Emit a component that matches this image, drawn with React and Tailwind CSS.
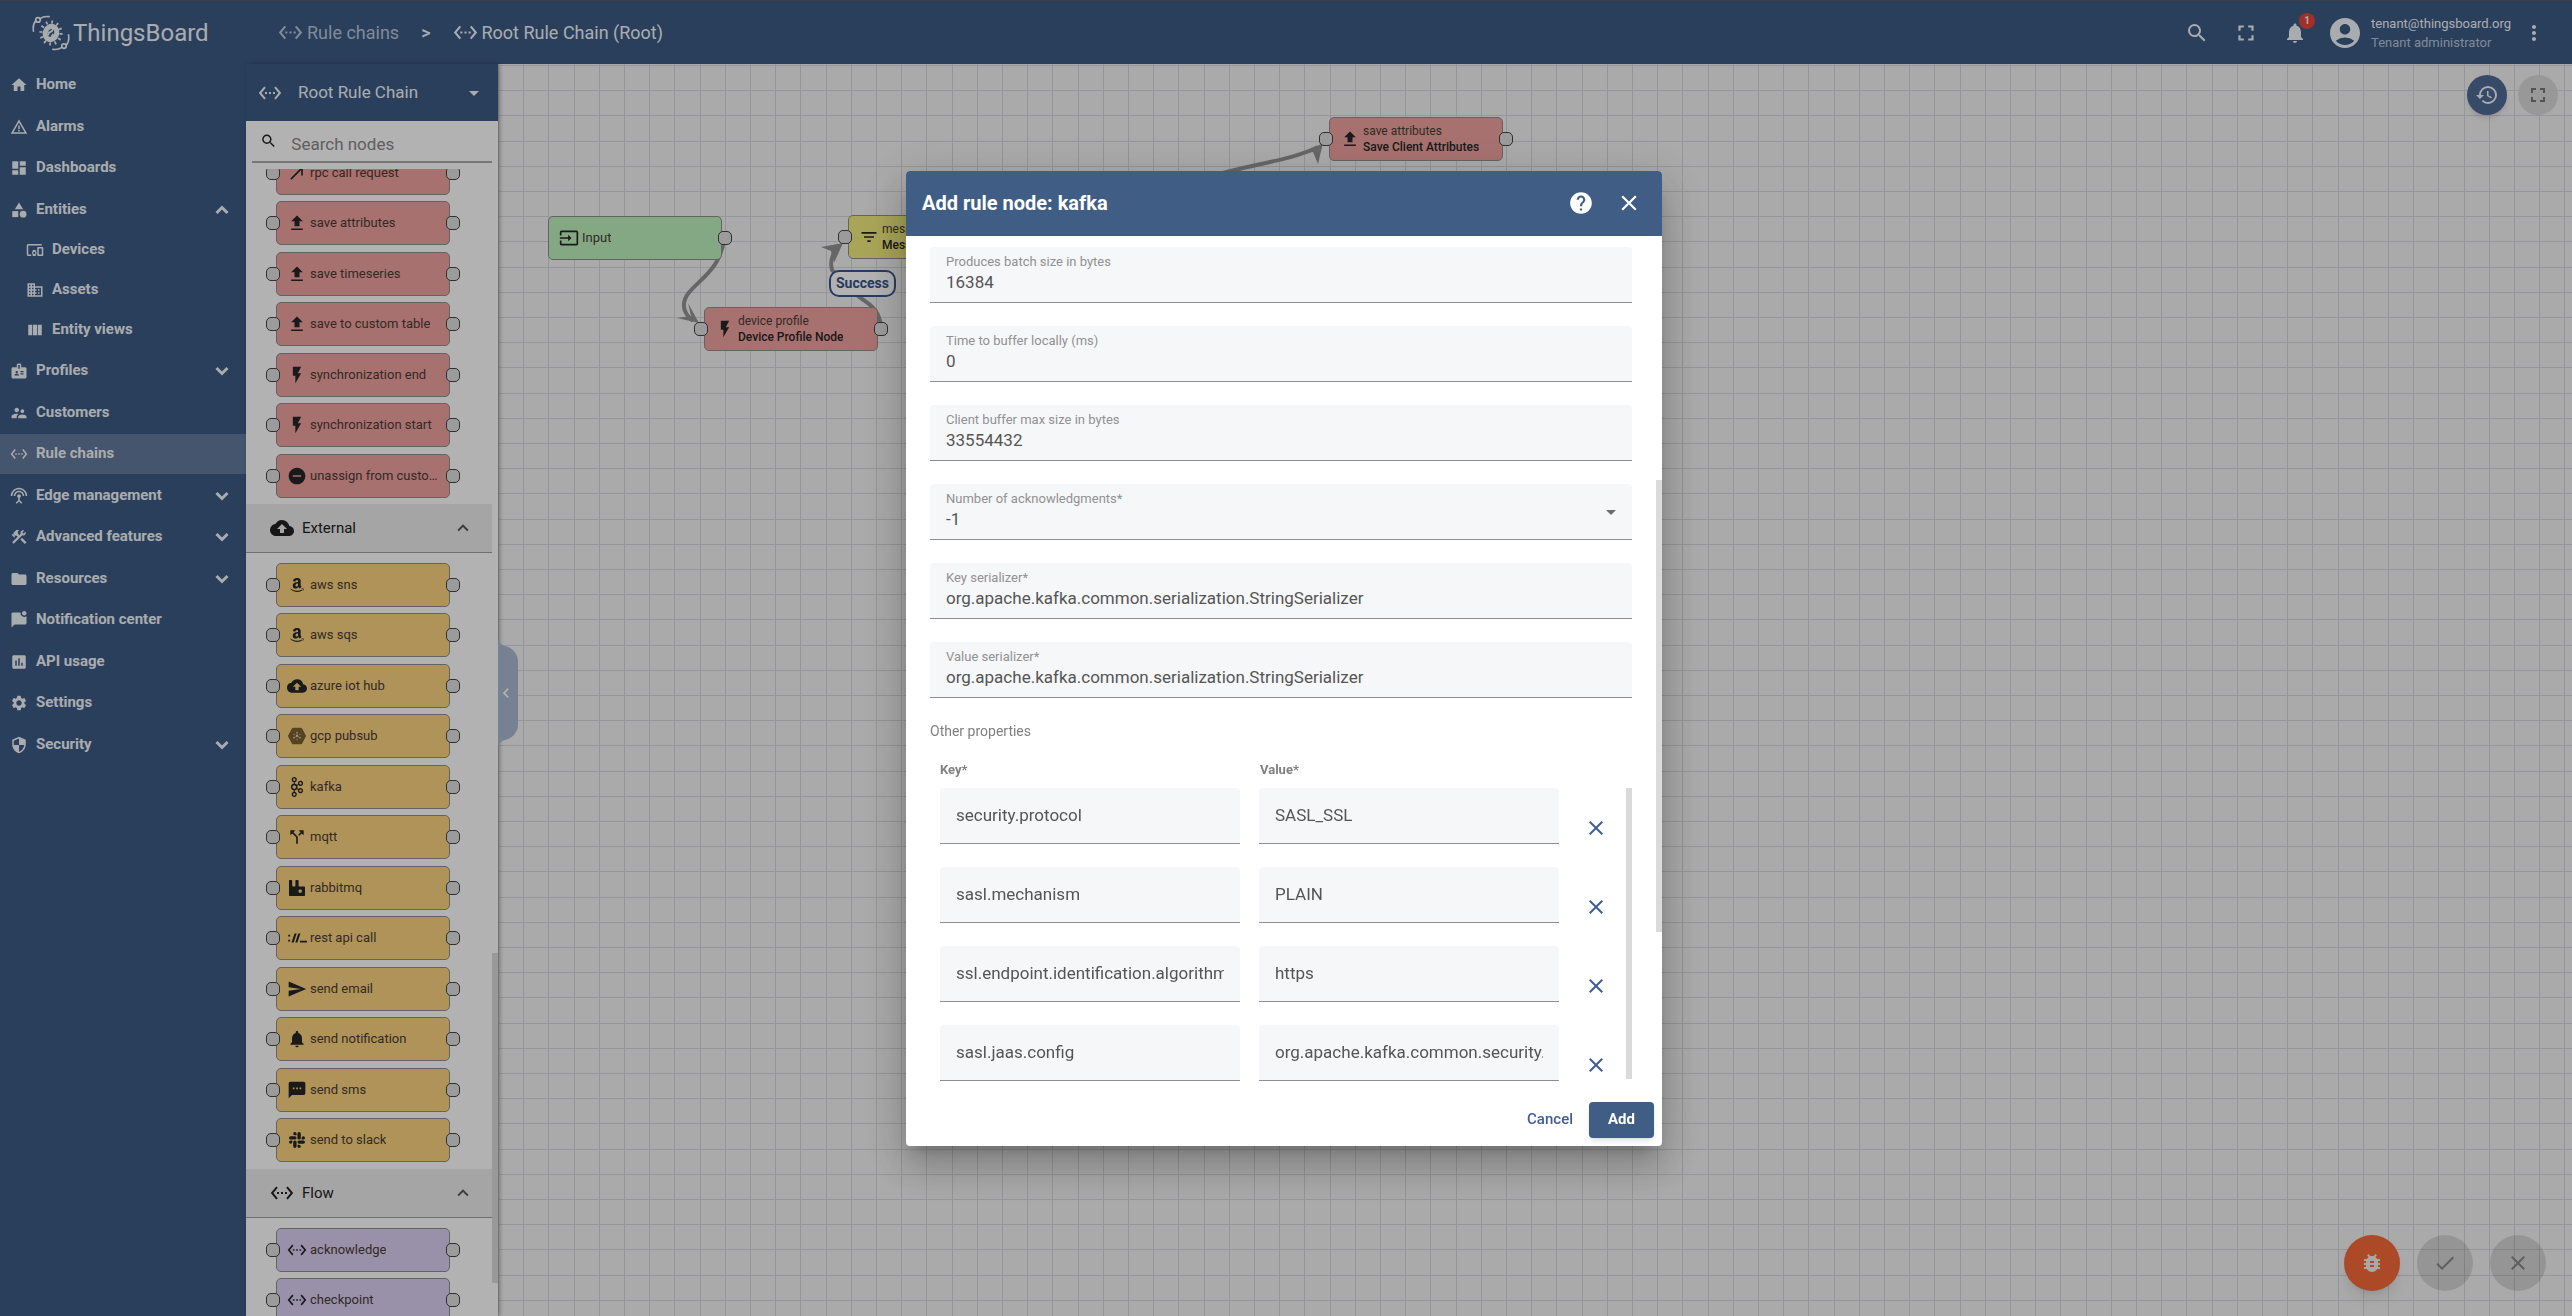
import React from "react";
import {
  MdHome, MdWarningAmber, MdDashboard, MdCategory, MdDevicesOther, MdDomain, MdViewColumn, MdBadge,
  MdSupervisorAccount, MdSettingsEthernet, MdSettingsInputAntenna, MdConstruction, MdFolder,
  MdMarkChatUnread, MdInsertChart, MdSettings, MdSecurity, MdSearch, MdFullscreen, MdNotifications,
  MdAccountCircle, MdMoreVert, MdArrowDropDown, MdCallMade, MdFlashOn, MdRemoveCircle, MdCloudUpload,
  MdCallSplit, MdSend, MdSms, MdInput, MdFilterList, MdBugReport, MdDone, MdClose, MdHistory, MdHelp,
  MdExpandLess, MdChevronLeft,
} from "react-icons/md";
import { FaAmazon } from "react-icons/fa";
import { SiApachekafka, SiRabbitmq, SiSlack } from "react-icons/si";

function Upload({ className }) {
  return (
    <svg viewBox="0 0 24 24" className={className} fill="currentColor" aria-hidden="true">
      <path d="M9 16h6v-6h4l-7-7-7 7h4zM5 18.5h14v2H5z" />
    </svg>
  );
}

function PubSub({ className }) {
  return (
    <svg viewBox="0 0 24 24" className={className} aria-hidden="true">
      <path d="M7.500 2h9c.7 0 1.200.3 1.600 1l4.400 8c.4.700.4 1.300 0 2l-4.400 8c-.4.700-.9 1-1.600 1h-9c-.7 0-1.200-.3-1.600-1L1.500 13c-.4-.7-.4-1.300 0-2l4.400-8c.4-.7.900-1 1.600-1z" fill="#7c6032" />
      <path d="M12 12V8M12 12l3.500 2M12 12l-3.500 2" stroke="#e0cfa8" strokeWidth=".8" />
      <g fill="#e0cfa8">
        <circle cx="12" cy="12" r="1.400" /><circle cx="12" cy="7.800" r="1" /><circle cx="15.700" cy="14.200" r="1" />
        <circle cx="8.300" cy="14.200" r="1" /><circle cx="8.500" cy="10" r=".7" /><circle cx="15.500" cy="10" r=".7" /><circle cx="12" cy="16" r=".7" />
      </g>
    </svg>
  );
}

function RestCall({ className }) {
  return (
    <svg viewBox="0 0 24 24" className={className} fill="currentColor" aria-hidden="true">
      <path d="M1.500 8h2.200v2.200H1.500zM1.500 14h2.200v2.200H1.500zM9 6.500h2.600L8 17.500H5.400zM13.500 6.500h2.600l-3.600 11H9.900zM15.500 15.200H24v2.300h-8.500z" />
    </svg>
  );
}

function Chevron({ up }) {
  return (
    <svg viewBox="0 0 14 10" className="ml-auto mr-[17px] h-[10px] w-[14px]" fill="none" stroke="currentColor" strokeWidth="3" aria-hidden="true">
      <path d={up ? "M1.500 8 7 2.500 12.500 8" : "M1.500 2 7 7.500 12.500 2"} />
    </svg>
  );
}

function Logo() {
  return (
    <svg viewBox="0 0 40 40" className="h-[38px] w-[38px]" fill="none" stroke="currentColor" strokeWidth="1.700" aria-hidden="true">
      <path d="M1.500 18c-.6-4.500 0-8.500 2.600-11M8.500 4.800C11 3 14.500 2.300 18 2.800" strokeLinecap="round" />
      <circle cx="6.300" cy="6.200" r="2.400" />
      <path d="M38.500 22c.6 4.500 0 8.500-2.600 11M31.500 35.200C29 37 25.500 37.700 22 37.200" strokeLinecap="round" />
      <circle cx="33.700" cy="33.800" r="2.400" />
      <ellipse cx="20" cy="20" rx="10.500" ry="11.500" strokeWidth="3.400" strokeDasharray="1.800 3.960" />
      <ellipse cx="20" cy="20" rx="6" ry="7" strokeWidth="5.400" transform="rotate(20 20 20)" />
      <path d="M17 22.500c0-3 1-3.500 3-4s2-2 2-3.500M20 26c0-2.500 1.500-3 2.500-5" strokeWidth="1.800" />
    </svg>
  );
}

const MENU = [
  { icon: MdHome, label: "Home" },
  { icon: MdWarningAmber, label: "Alarms" },
  { icon: MdDashboard, label: "Dashboards" },
  {
    icon: MdCategory, label: "Entities", open: true, more: true,
    children: [
      { icon: MdDevicesOther, label: "Devices" },
      { icon: MdDomain, label: "Assets" },
      { icon: MdViewColumn, label: "Entity views" },
    ],
  },
  { icon: MdBadge, label: "Profiles", more: true },
  { icon: MdSupervisorAccount, label: "Customers" },
  { icon: MdSettingsEthernet, label: "Rule chains", active: true },
  { icon: MdSettingsInputAntenna, label: "Edge management", more: true },
  { icon: MdConstruction, label: "Advanced features", more: true },
  { icon: MdFolder, label: "Resources", more: true },
  { icon: MdMarkChatUnread, label: "Notification center" },
  { icon: MdInsertChart, label: "API usage" },
  { icon: MdSettings, label: "Settings" },
  { icon: MdSecurity, label: "Security", more: true },
];

function Sidebar() {
  return (
    <nav className="w-[246px] shrink-0 bg-[#3c5b85] pt-px text-[15px] font-bold text-[#f3f6fa]">
      <ul>
        {MENU.map(({ icon: Icon, label, active, more, open, children }) => (
          <li key={label} className="odd:mb-0.5 even:mb-px">
            <a href="#" className={`flex h-10 items-center pl-[10px] ${active ? "bg-[#637a9c]" : ""}`}>
              <Icon className="size-[18px] shrink-0" />
              <span className="ml-2 pb-0.5">{label}</span>
              {more && <Chevron up={open} />}
            </a>
            {children && (
              <ul>
                {children.map(({ icon: Sub, label: text }) => (
                  <li key={text}>
                    <a href="#" className="flex h-10 items-center pl-[26px]">
                      <Sub className="size-[18px] shrink-0" />
                      <span className="ml-2 pb-0.5">{text}</span>
                    </a>
                  </li>
                ))}
              </ul>
            )}
          </li>
        ))}
      </ul>
    </nav>
  );
}

function Header() {
  return (
    <header className="flex h-16 shrink-0 items-center border-t border-[#555b66] bg-[#3c5b85] text-[#f3f6fa]">
      <a href="#" className="flex w-[246px] items-center pl-8">
        <Logo />
        <span className="ml-[3px] text-[24px]">ThingsBoard</span>
      </a>
      <div className="ml-8 flex items-center text-[18px]">
        <a href="#" className="flex items-center text-[#b9c6d7]">
          <MdSettingsEthernet className="mr-1 size-[25px]" />Rule chains
        </a>
        <span className="mx-[22px] text-[18px] font-medium">&gt;</span>
        <a href="#" className="flex items-center">
          <MdSettingsEthernet className="mr-1 size-[25px]" />Root Rule Chain (Root)
        </a>
      </div>
      <div className="ml-auto flex items-center pr-[26px]">
        <button aria-label="Search" className="mr-6"><MdSearch className="size-6" /></button>
        <button aria-label="Fullscreen" className="mr-6"><MdFullscreen className="size-[26px]" /></button>
        <button aria-label="Notifications" className="relative mr-5">
          <MdNotifications className="size-6" />
          <span className="absolute -right-2 -top-2 flex size-4 items-center justify-center rounded-full bg-[#e8453c] text-[10px] font-bold">1</span>
        </button>
        <MdAccountCircle className="mr-2 size-9" />
        <div className="mr-3 w-[139px] whitespace-nowrap text-[13px]">
          <div className="leading-5">tenant@thingsboard.org</div>
          <div className="leading-[18px] text-[#b9c6d7]">Tenant administrator</div>
        </div>
        <button aria-label="More"><MdMoreVert className="size-6" /></button>
      </div>
    </header>
  );
}

const FILL = {
  red: "bg-[#efa29f]",
  amber: "bg-[#fbd37e]",
  purple: "bg-[#dccef3]",
  green: "bg-[#bdefbd]",
  yellow: "bg-[#f3ed7e]",
};

function Port({ side }) {
  return (
    <span className={`absolute top-[14px] h-[14px] w-[14px] rounded-[5px] border border-[#444] bg-[#dedede] ${side === "left" ? "-left-[11px]" : "-right-[11px]"}`} />
  );
}

function Node({ icon: Icon, color, type, name, small, left = true, right = true }) {
  return (
    <div className={`relative flex h-11 w-[174px] items-center rounded-[5px] border border-[#8f8f8f] pl-[10px] pr-2 leading-4 text-[#4a3c34] ${name ? "text-[12px]" : "text-[13px]"} ${FILL[color]}`}>
      {left && <Port side="left" />}
      <Icon className={`mr-[3px] size-5 shrink-0 text-[#262626] ${small ? "p-0.5" : ""}`} />
      <div className="min-w-0">
        <div className="truncate">{type}</div>
        {name && <div className="truncate font-medium text-[#262626]">{name}</div>}
      </div>
      {right && <Port side="right" />}
    </div>
  );
}

const ACTION = [
  [MdCallMade, "rpc call request"],
  [Upload, "save attributes"],
  [Upload, "save timeseries"],
  [Upload, "save to custom table"],
  [MdFlashOn, "synchronization end"],
  [MdFlashOn, "synchronization start"],
  [MdRemoveCircle, "unassign from customer"],
];
const EXTERNAL = [
  [FaAmazon, "aws sns", true],
  [FaAmazon, "aws sqs", true],
  [MdCloudUpload, "azure iot hub"],
  [PubSub, "gcp pubsub"],
  [SiApachekafka, "kafka"],
  [MdCallSplit, "mqtt"],
  [SiRabbitmq, "rabbitmq", true],
  [RestCall, "rest api call"],
  [MdSend, "send email"],
  [MdNotifications, "send notification"],
  [MdSms, "send sms"],
  [SiSlack, "send to slack", true],
];
const FLOW = [
  [MdSettingsEthernet, "acknowledge"],
  [MdSettingsEthernet, "checkpoint"],
];

function NodeList({ items, color }) {
  return (
    <ul className="pl-[30px]">
      {items.map(([icon, type, small]) => (
        <li key={type} className="odd:mb-1.5 even:mb-[7px]">
          <Node icon={icon} color={color} type={type} small={small} />
        </li>
      ))}
    </ul>
  );
}

function Category({ icon: Icon, title }) {
  return (
    <button className="mb-[10px] flex h-[49px] w-full items-center border-b border-[#a0a0a0] bg-[#ececec] pl-6 pr-[18px] text-[15px] text-[#222]">
      <Icon className="size-6 shrink-0" />
      <span className="ml-2">{title}</span>
      <MdExpandLess className="ml-auto size-[22px] text-[#555]" />
    </button>
  );
}

function Palette() {
  return (
    <aside className="relative z-10 flex w-[252px] shrink-0 flex-col bg-white shadow-[2px_0_4px_rgba(0,0,0,0.3)]">
      <button className="flex h-[57px] shrink-0 items-center bg-[#3c5b85] pl-3 pr-3 text-[17px] text-[#f3f6fa]">
        <MdSettingsEthernet className="size-6" />
        <span className="ml-4">Root Rule Chain</span>
        <MdArrowDropDown className="ml-auto size-6" />
      </button>
      <label className="mx-1.5 flex h-[42px] shrink-0 items-center border-b-2 border-[#aaa] pl-2">
        <MdSearch className="size-5 text-[#222]" />
        <input placeholder="Search nodes" className="ml-[14px] w-full pt-2 text-[17px] outline-none placeholder:text-[#888]" />
      </label>
      <div className="mt-1.5 min-h-0 flex-1 overflow-hidden pr-1.5">
        <div className="-mt-[18px]">
          <NodeList items={ACTION} color="red" />
          <Category icon={MdCloudUpload} title="External" />
          <NodeList items={EXTERNAL} color="amber" />
          <Category icon={MdSettingsEthernet} title="Flow" />
          <NodeList items={FLOW} color="purple" />
        </div>
      </div>
      <div className="absolute bottom-[33px] right-0 h-[330px] w-1.5 bg-[#dcdcdc]" />
      <button aria-label="Collapse library" className="absolute left-full top-[574px] flex h-[110px] w-5 items-center justify-center text-white">
        <svg viewBox="0 0 20 110" className="absolute inset-0 h-[110px] w-5" fill="#a9b9d0" aria-hidden="true">
          <path d="M0 0c1 5 3 7 7 8 8 2 13 8 13 16v62c0 8-5 14-13 16-4 1-6 3-7 8z" />
        </svg>
        <MdChevronLeft className="relative right-0.5 size-5" />
      </button>
    </aside>
  );
}

const STEPS = [0, 25, 50, 76, 101];

function Canvas() {
  return (
    <main className="relative min-w-0 flex-1 overflow-hidden bg-[#f4f4f4]">
      <svg className="absolute inset-0 h-full w-full" aria-hidden="true">
        <defs>
          <pattern id="grid" width="126" height="126" patternUnits="userSpaceOnUse">
            {STEPS.map((p) => (
              <g key={p} fill="#d6d7db">
                <rect x={p} y="0" width="1" height="126" />
                <rect x="0" y={p + 1} width="126" height="1" />
              </g>
            ))}
          </pattern>
        </defs>
        <rect width="100%" height="100%" fill="url(#grid)" />
        <g fill="none" stroke="#939393" strokeWidth="4">
          <path d="M226 174C223 212 187 221 186 240C185 247 189 252 195 257" />
          <path d="M384 265C380 240 368 240 358 230L334 206C332 198 333 192 339 184" />
          <path d="M660 135C720 100 780 103 820 83" />
        </g>
        <g fill="#939393">
          <path d="M179 254l22 5-11-20 3 13z" />
          <path d="M323 183l22-4-9 20-3-12z" />
          <path d="M806 89l19-10-5 21-5-12z" />
        </g>
      </svg>
      <div className="absolute left-[50px] top-[152px]"><Node icon={MdInput} color="green" type="Input" left={false} /></div>
      <div className="absolute left-[206px] top-[243px]"><Node icon={MdFlashOn} color="red" type="device profile" name="Device Profile Node" /></div>
      <div className="absolute left-[350px] top-[151px]"><Node icon={MdFilterList} color="yellow" type="message type switch" name="Message Type Switch" /></div>
      <div className="absolute left-[831px] top-[53px]"><Node icon={Upload} color="red" type="save attributes" name="Save Client Attributes" /></div>
      <div className="absolute left-[331px] top-[206px] flex h-[27px] w-[67px] items-center justify-center rounded-[10px] border-2 border-[#34588f] bg-white text-[14px] font-bold text-[#34538a]">Success</div>

      <div className="absolute right-[14px] top-[11px] flex gap-[11px]">
        <button aria-label="Version history" className="flex size-10 items-center justify-center rounded-full bg-[#506a94] text-[#f3f6fa] shadow-md"><MdHistory className="size-6" /></button>
        <button aria-label="Fullscreen canvas" className="flex size-10 items-center justify-center rounded-full bg-[#dadada] text-[#777]"><MdFullscreen className="size-6" /></button>
      </div>
      <div className="absolute bottom-[25px] right-[26px] flex gap-[17px]">
        <button aria-label="Debug" className="flex size-14 items-center justify-center rounded-full bg-[#f76b39] text-[#f4efec] shadow-lg"><MdBugReport className="size-6" /></button>
        <button aria-label="Apply changes" className="flex size-14 items-center justify-center rounded-full bg-black/12 text-[#888]"><MdDone className="size-6" /></button>
        <button aria-label="Discard changes" className="flex size-14 items-center justify-center rounded-full bg-black/12 text-[#888]"><MdClose className="size-6" /></button>
      </div>
    </main>
  );
}

const FIELDS = [
  ["batch", "Produces batch size in bytes", "16384"],
  ["linger", "Time to buffer locally (ms)", "0"],
  ["buffer", "Client buffer max size in bytes", "33554432"],
  ["acks", "Number of acknowledgments*", "-1"],
  ["keySerializer", "Key serializer*", "org.apache.kafka.common.serialization.StringSerializer"],
  ["valueSerializer", "Value serializer*", "org.apache.kafka.common.serialization.StringSerializer"],
];

const PROPS = [
  ["security.protocol", "SASL_SSL"],
  ["sasl.mechanism", "PLAIN"],
  ["ssl.endpoint.identification.algorithm", "https"],
  ["sasl.jaas.config", "org.apache.kafka.common.security.plain.PlainLoginModule"],
];

function Field({ id, label, value }) {
  return (
    <div className="relative flex h-14 flex-col rounded-t border-b border-[#8f8f8f] bg-[#f6f7f9] px-4 pt-[7px]">
      <label htmlFor={id} className="text-[13px] leading-4 text-[#919191]">{label}</label>
      {id === "acks" ? (
        <>
          <select id={id} defaultValue={value} className="h-6 w-full appearance-none bg-transparent text-[17px] leading-6 text-[#555] outline-none">
            <option>{value}</option>
          </select>
          <MdArrowDropDown className="pointer-events-none absolute right-[9px] top-4 size-6 text-[#6d6d6d]" />
        </>
      ) : (
        <input id={id} defaultValue={value} className="h-6 w-full bg-transparent text-[17px] leading-6 text-[#555] outline-none" />
      )}
    </div>
  );
}

const CELL = "h-14 w-[300px] rounded-t border-b border-[#8f8f8f] bg-[#f6f7f9] px-4 text-[17px] text-[#555] outline-none";

function Dialog() {
  return (
    <div className="fixed inset-0 z-20 flex items-center justify-center bg-black/30 pr-1">
      <section role="dialog" aria-labelledby="dialog-title" className="w-[756px] overflow-hidden rounded bg-white shadow-[0_11px_15px_-7px_rgba(0,0,0,0.2),0_24px_38px_3px_rgba(0,0,0,0.14),0_9px_46px_8px_rgba(0,0,0,0.12)]">
        <header className="flex h-[65px] items-center bg-[#405e85] pl-4 pr-5 text-white">
          <h2 id="dialog-title" className="text-[20px] font-bold">Add rule node: kafka</h2>
          <button aria-label="Help" className="ml-auto"><MdHelp className="size-[26px]" /></button>
          <button aria-label="Close" className="ml-[22px]"><MdClose className="size-[26px]" /></button>
        </header>
        <div className="relative pl-6 pr-[30px] pt-[11px]">
          <div className="flex flex-col gap-[23px]">
            {FIELDS.map(([id, label, value]) => <Field key={id} id={id} label={label} value={value} />)}
          </div>
          <p className="mt-[25px] text-[14px] leading-4 text-[#808080]">Other properties</p>
          <div className="mt-[23px] flex pl-[10px] text-[13px] font-bold leading-4 text-[#808080]">
            <span className="w-[320px]">Key*</span>
            <span>Value*</span>
          </div>
          <div className="relative mt-[10px] flex flex-col gap-[23px] pl-[10px]">
            {PROPS.map(([key, value]) => (
              <div key={key} className="flex items-center">
                <input aria-label="Key" defaultValue={key} className={CELL} />
                <input aria-label="Value" defaultValue={value} className={`ml-[19px] ${CELL}`} />
                <button aria-label="Remove property" className="ml-[25px] mt-6 text-[#405e93]"><MdClose className="size-6" /></button>
              </div>
            ))}
            <div className="absolute bottom-0.5 right-0 top-0 w-1.5 bg-[#dadada]" />
          </div>
          <div className="absolute right-0 top-[244px] h-[452px] w-1.5 bg-[#dadada]" />
        </div>
        <footer className="flex items-center justify-end pb-2 pr-2 pt-[21px] text-[15px] font-medium">
          <button className="h-9 px-4 text-[#405e93]">Cancel</button>
          <button className="h-9 w-[65px] rounded bg-[#405e85] font-bold text-white shadow-md">Add</button>
        </footer>
      </section>
    </div>
  );
}

export default function App() {
  return (
    <div className="flex h-screen flex-col overflow-hidden font-[Roboto,sans-serif]">
      <Header />
      <div className="flex min-h-0 flex-1">
        <Sidebar />
        <Palette />
        <Canvas />
      </div>
      <Dialog />
    </div>
  );
}
